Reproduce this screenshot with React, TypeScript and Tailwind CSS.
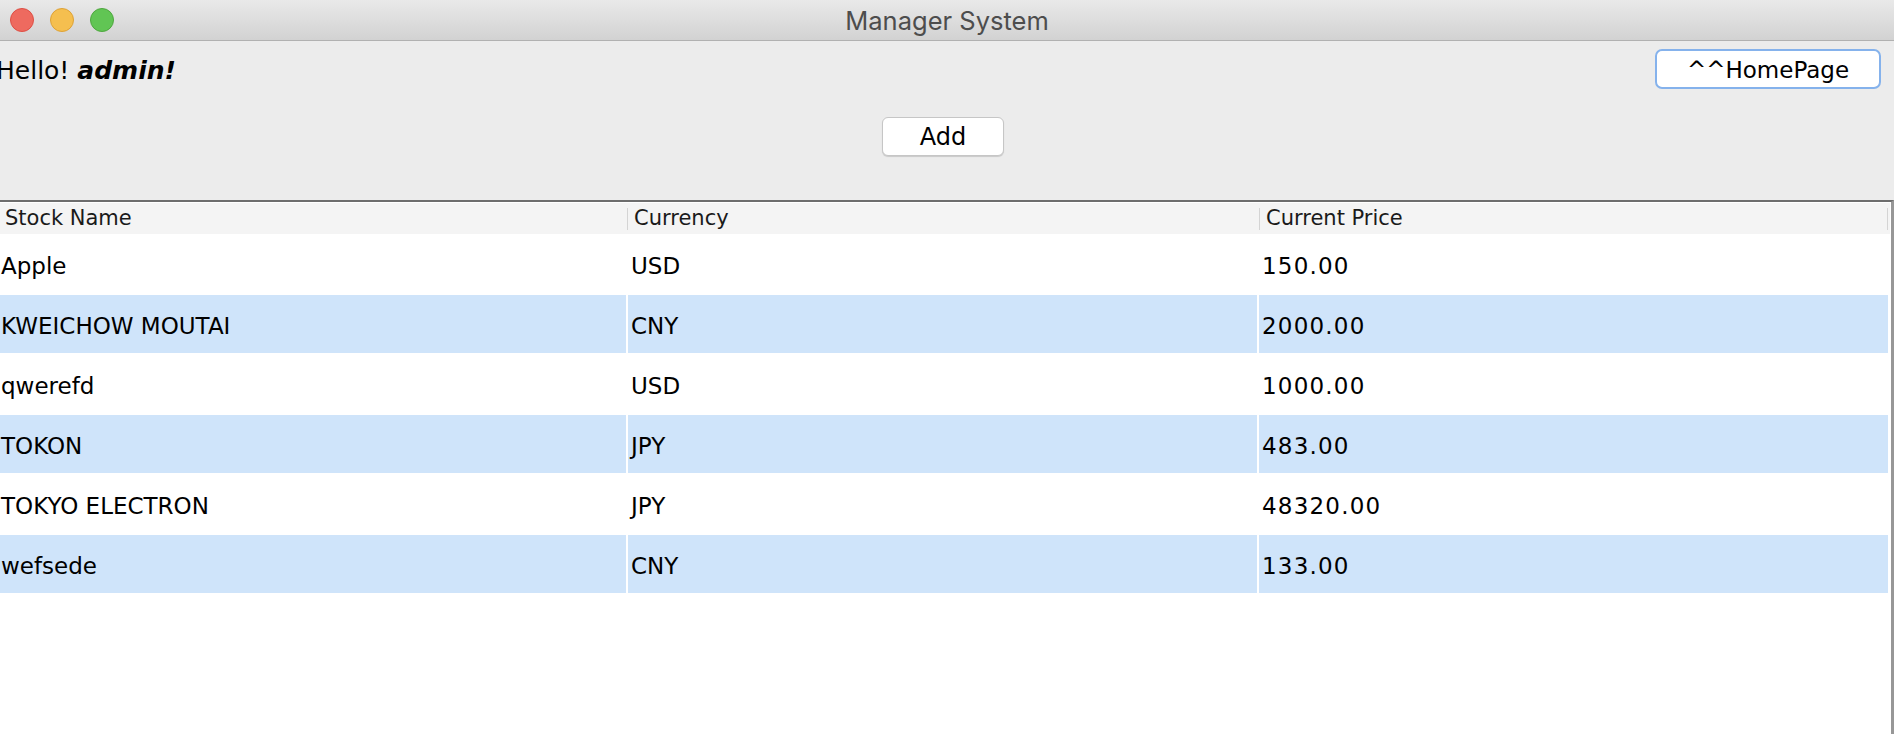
const rows = [
  { name: "Apple", currency: "USD", price: "150.00" },
  { name: "KWEICHOW MOUTAI", currency: "CNY", price: "2000.00" },
  { name: "qwerefd", currency: "USD", price: "1000.00" },
  { name: "TOKON", currency: "JPY", price: "483.00" },
  { name: "TOKYO ELECTRON", currency: "JPY", price: "48320.00" },
  { name: "wefsede", currency: "CNY", price: "133.00" },
]

function TitleBar() {
  return (
    <div className="grid h-[41px] shrink-0 grid-cols-[1fr_auto_1fr] items-center border-b border-[#b1b1b1] bg-gradient-to-b from-[#e9e9e9] to-[#d2d2d2]">
      <div className="flex items-center gap-[16px] pl-[10px]">
        <span className="h-[24px] w-[24px] rounded-full border border-[#de4f45] bg-[#ee6a5f]" />
        <span className="h-[24px] w-[24px] rounded-full border border-[#dea236] bg-[#f5bf4f]" />
        <span className="h-[24px] w-[24px] rounded-full border border-[#4fa73f] bg-[#61c554]" />
      </div>
      <div className="pt-[2px] text-[25.5px] leading-none text-[#4d4d4d] [font-family:Inter,'Liberation_Sans',sans-serif]">
        Manager System
      </div>
      <div />
    </div>
  )
}

function HeaderCell({ label, divider, className }: { label: string; divider: boolean; className: string }) {
  return (
    <div className={`flex h-full items-center ${className}`}>
      {divider && <span className="h-[22px] w-px bg-[#d4d4d4]" />}
      <span className={divider ? "pl-[6px]" : "pl-[5px]"}>{label}</span>
    </div>
  )
}

export default function App() {
  return (
    <div className="flex h-[734px] w-[1894px] flex-col overflow-hidden bg-white [font-family:'DejaVu_Sans',sans-serif]">
      <TitleBar />

      <div className="flex h-[159px] shrink-0 flex-col bg-[#ececec]">
        <div className="flex h-[48px] items-center justify-between pr-[13px] pt-[8px]">
          <p className="-ml-[4px] mt-[4px] text-[25px] leading-[36px] text-black">
            Hello! <span className="font-bold italic">admin!</span>
          </p>
          <button className="h-[40px] w-[226px] rounded-[7px] border-2 border-[#85b2ec] bg-white pt-[2px] text-[23px] text-black">
            ^^HomePage
          </button>
        </div>
        <div className="mt-[28px] flex justify-center pr-[8px]">
          <button className="h-[39px] w-[122px] rounded-[6px] border border-[#c6c6c6] bg-white pt-px text-[24px] text-black shadow-[0_1px_1px_rgba(0,0,0,0.15)]">
            Add
          </button>
        </div>
      </div>

      <div className="flex flex-1 flex-col border-r-[3px] border-t-2 border-r-[#979797] border-t-[#6d6d6d] pt-px">
        <div className="flex h-[31px] w-[1890px] items-center bg-[#f4f4f4] text-[21px] text-[#1a1a1a]">
          <HeaderCell label="Stock Name" divider={false} className="w-[627px]" />
          <HeaderCell label="Currency" divider className="w-[632px]" />
          <HeaderCell label="Current Price" divider className="flex-1" />
          <span className="mr-[2px] h-[22px] w-px bg-[#d4d4d4]" />
        </div>

        {rows.map((row, i) => {
          const cell = i % 2 === 1 ? "bg-[#cfe4fa]" : "bg-white"
          return (
            <div key={row.name} className="flex h-[60px] w-[1888px] gap-[2px] py-px text-[23px] text-black">
              <div className={`flex w-[626px] items-center pl-px pt-[5px] ${cell}`}>{row.name}</div>
              <div className={`flex w-[629px] items-center pl-[3px] pt-[5px] ${cell}`}>{row.currency}</div>
              <div className={`flex flex-1 items-center pl-[3px] pt-[5px] tracking-[1.2px] ${cell}`}>{row.price}</div>
            </div>
          )
        })}
      </div>
    </div>
  )
}
